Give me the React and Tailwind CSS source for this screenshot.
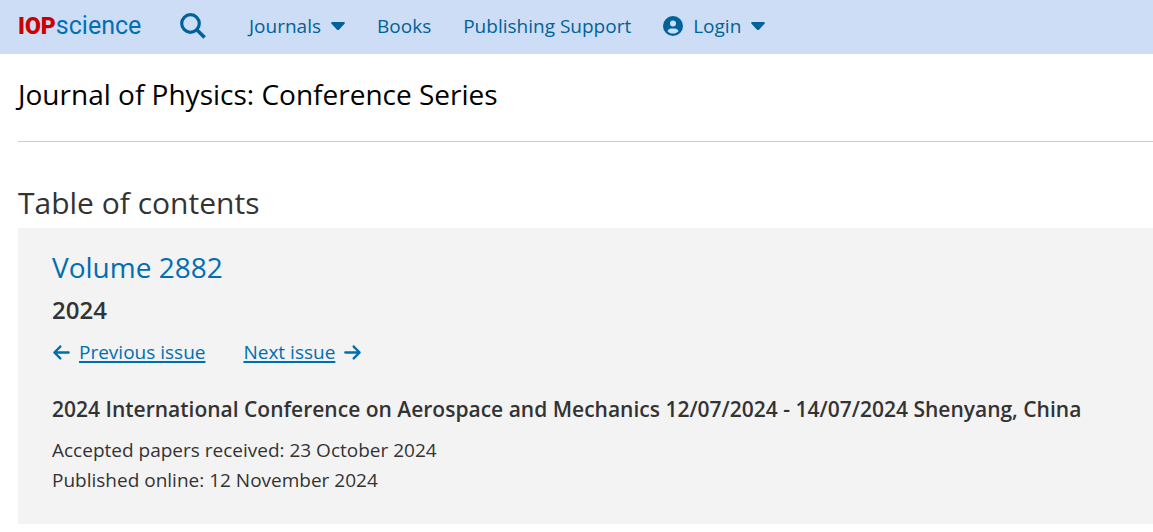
import React from 'react';
import { FaArrowLeft, FaArrowRight } from 'react-icons/fa6';

const SearchIcon = () => (
    <svg viewBox="0 0 26 26" className="w-[26px] h-[26px]" fill="none" stroke="currentColor" aria-hidden="true">
        <circle cx="10.5" cy="10.5" r="8.8" strokeWidth="3.2" />
        <path d="M16.8 16.8L24.6 24.6" strokeWidth="3.6" />
    </svg>
);

const Caret = () => (
    <svg viewBox="0 0 14 8" className="w-3.5 h-2" fill="currentColor" aria-hidden="true">
        <path d="M1.3 0h11.4c1 0 1.5 1.1.8 1.8L8.2 7.4c-.7.7-1.7.7-2.4 0L.5 1.8C-.2 1.1.3 0 1.3 0z" />
    </svg>
);

const UserIcon = () => (
    <svg viewBox="0 0 20 20" className="w-5 h-5" aria-hidden="true">
        <circle cx="10" cy="10" r="10" fill="currentColor" />
        <circle cx="10" cy="7.5" r="3" fill="#ccddf5" />
        <path d="M4.5 15.2c.7-1.8 1.900-2.700 3.500-2.700h4c1.600 0 2.800.9 3.500 2.700-1.400 1.500-3.300 2.300-5.500 2.300s-4.100-.8-5.500-2.300z" fill="#ccddf5" />
    </svg>
);

const Header = () => (
    <header className="flex items-center h-[54px] pb-0.5 pl-[18px] bg-[#ccddf5] text-[#00629b]">
        {/* Logo */}
        <a href="#home" className="flex items-baseline w-[162px] leading-8 font-['Roboto',sans-serif]">
            <span className="text-[23px] font-black text-[#cc0000]">IOP</span>
            <span className="text-[25px] text-[#0070b5]">science</span>
        </a>
        <button type="button" aria-label="Search">
            <SearchIcon />
        </button>

        {/* Main navigation */}
        <nav className="flex items-center gap-8 ml-[43px] text-[19px] leading-6">
            <button type="button" className="flex items-center gap-2.5">
                Journals
                <Caret />
            </button>
            <a href="#books">Books</a>
            <a href="#support">Publishing Support</a>
            <button type="button" className="flex items-center gap-2.5">
                <UserIcon />
                Login
                <Caret />
            </button>
        </nav>
    </header>
);

const IssueNav = () => (
    <div className="flex items-center gap-[38px] mt-3 text-[19px] leading-6 text-[#006eb2]">
        <a href="#previous" className="flex items-center gap-2">
            <FaArrowLeft size={19} />
            <span className="underline decoration-2 underline-offset-2">Previous issue</span>
        </a>
        <a href="#next" className="flex items-center gap-2">
            <span className="underline decoration-2 underline-offset-2">Next issue</span>
            <FaArrowRight size={19} />
        </a>
    </div>
);

const App = () => {
    return (
        <div className="bg-white text-[#333333] font-['Open_Sans','Noto_Sans',sans-serif]">
            <Header />
            <main className="pl-[18px]">
                <h1 className="pt-5 pb-[27px] border-b border-[#cccccc] text-[28px] leading-10 text-black">
                    Journal of Physics: Conference Series
                </h1>
                <h2 className="mt-[38px] pb-0.5 text-[30px] leading-[46px]">Table of contents</h2>

                {/* Issue details */}
                <section className="px-[34px] pt-[19px] pb-[29px] bg-[#f3f3f3]">
                    <h3 className="text-[28px] leading-10 text-[#006eb2]">Volume 2882</h3>
                    <p className="mt-[5px] text-2xl leading-9 font-semibold">2024</p>
                    <IssueNav />
                    <h4 className="mt-[29px] text-[21px] leading-8 font-semibold">
                        2024 International Conference on Aerospace and Mechanics 12/07/2024 - 14/07/2024 Shenyang, China
                    </h4>
                    <div className="mt-2.5 text-[19px] leading-[30px]">
                        <p>Accepted papers received: 23 October 2024</p>
                        <p>Published online: 12 November 2024</p>
                    </div>
                </section>
            </main>
        </div>
    );
};

export default App;
